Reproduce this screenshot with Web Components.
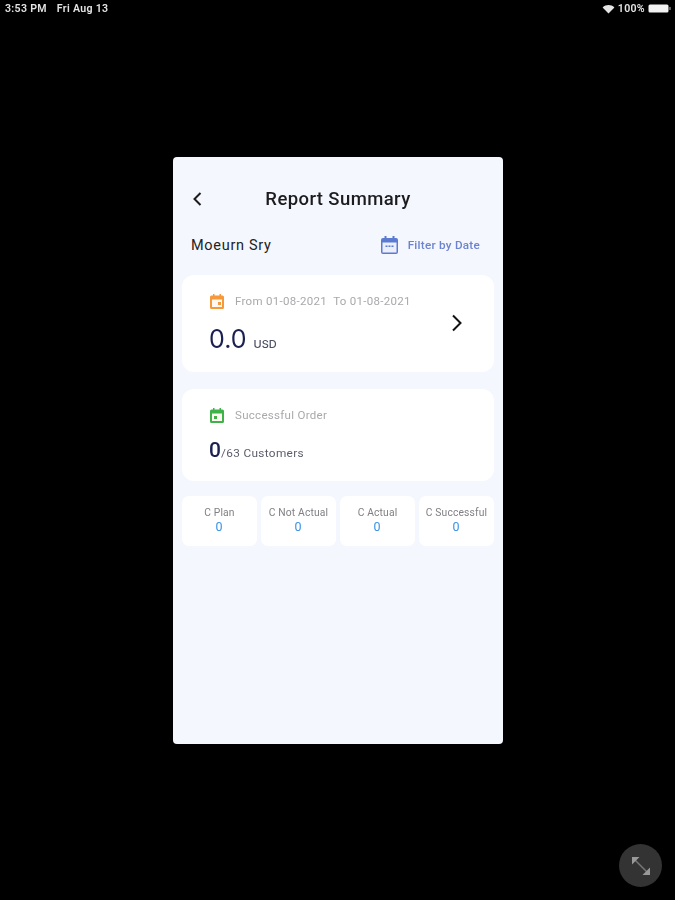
<!DOCTYPE html>
<html>
<head>
<meta charset="utf-8">
<style>
html, body { margin: 0; height: 900px; background: #000; overflow: hidden; }
body { font-family: Inter, Roboto, "Liberation Sans", sans-serif; position: relative; }
</style>
</head>
<body>
<status-bar></status-bar>
<report-screen>
  <report-card slot="cards" style="height:97px;margin-bottom:17px" tone="#f5993a" label="From 01-08-2021&nbsp; To 01-08-2021" arrow></report-card>
  <report-card slot="cards" style="height:92px" tone="#3fb24a" label="Successful Order" second></report-card>
  <stat-tile slot="tiles" label="C Plan"></stat-tile>
  <stat-tile slot="tiles" label="C Not Actual"></stat-tile>
  <stat-tile slot="tiles" label="C Actual"></stat-tile>
  <stat-tile slot="tiles" label="C Successful"></stat-tile>
</report-screen>
<expand-button></expand-button>

<script>
class StatusBar extends HTMLElement {
  constructor() {
    super();
    this.attachShadow({ mode: 'open' }).innerHTML = `
<style>
:host { display: flex; align-items: center; height: 17px; padding: 0 4px 0 5px; color: #e4e4e4; font: 600 10.6px Roboto, sans-serif; letter-spacing: .3px; filter: blur(.5px); }
.day { margin-left: 10px; }
.right { margin-left: auto; display: flex; align-items: center; gap: 3px; }
svg { display: block; }
</style>
<span>3:53 PM</span><span class="day">Fri Aug 13</span>
<div class="right">
  <svg width="13" height="10" viewBox="0 0 13 10"><path d="M6.5 9.5 0.6 3.4C4 .2 9 .2 12.4 3.4Z" fill="#e4e4e4"/></svg>
  <span>100%</span>
  <svg width="23" height="9" viewBox="0 0 23 9"><rect x=".5" y=".5" width="20" height="8" rx="1.500" fill="#f2f2f2"/><rect x="21.300" y="3" width="1.400" height="3" fill="#888"/></svg>
</div>`;
  }
}
customElements.define('status-bar', StatusBar);

class ReportScreen extends HTMLElement {
  constructor() {
    super();
    this.attachShadow({ mode: 'open' }).innerHTML = `
<style>
:host { display: block; width: 330px; height: 587px; margin: 140px 0 0 173px; box-sizing: border-box; background: #f4f7fe; border-radius: 4px; padding: 0 9px; font-family: Inter, Roboto, sans-serif; filter: blur(.5px); }
header { position: relative; height: 84px; display: flex; justify-content: center; align-items: center; }
header svg { position: absolute; left: 10px; top: 34px; }
h1 { margin: 0; font: 500 18.5px Roboto, sans-serif; letter-spacing: .4px; color: #1c1c1e; }
.who { height: 34px; display: flex; align-items: center; justify-content: space-between; padding: 0 14px 0 9px; margin-top: -13px; margin-bottom: 13px; }
.name { font: 400 14.5px Roboto, sans-serif; letter-spacing: .7px; color: #222; }
.filter { display: flex; align-items: center; gap: 10px; font: 500 11.7px Roboto, sans-serif; letter-spacing: .25px; color: #6c83cf; }
.filter svg { display: block; }
.tiles { display: flex; gap: 4px; margin-top: 15px; }
</style>
<header>
  <svg width="11" height="16" viewBox="0 0 11 16" fill="none" stroke="#1c1c1e" stroke-width="2"><path d="M8.5 2 2.5 8l6 6"/></svg>
  <h1>Report Summary</h1>
</header>
<div class="who">
  <span class="name">Moeurn Sry</span>
  <span class="filter">
    <svg width="17" height="18" viewBox="0 0 17 18"><path fill="#5a7bd0" d="M3.500 0h2v2h6V0h2v2H15a2 2 0 0 1 2 2v12a2 2 0 0 1-2 2H2a2 2 0 0 1-2-2V4a2 2 0 0 1 2-2h1.500Z"/><rect x="1.500" y="6.500" width="14" height="10" fill="#eaeffb"/><rect x="4.500" y="9.500" width="2" height="1.500" fill="#5a7bd0"/><rect x="7.500" y="9.500" width="2" height="1.500" fill="#5a7bd0"/><rect x="10.500" y="9.500" width="2" height="1.500" fill="#5a7bd0"/></svg>
    Filter by Date
  </span>
</div>
<slot name="cards"></slot>
<div class="tiles"><slot name="tiles"></slot></div>`;
  }
}
customElements.define('report-screen', ReportScreen);

class ReportCard extends HTMLElement {
  connectedCallback() {
    if (this.shadowRoot) return;
    const tone = this.getAttribute('tone');
    const second = this.hasAttribute('second');
    const value = second
      ? `<span class="zero">0</span><span class="of">/63 Customers</span>`
      : `<span class="big">0.0</span><span class="usd">USD</span>`;
    const arrow = this.hasAttribute('arrow')
      ? `<svg class="next" width="12" height="18" viewBox="0 0 12 18" fill="none" stroke="#111" stroke-width="2"><path d="M2 1.500 9.500 9 2 16.500"/></svg>` : '';
    this.attachShadow({ mode: 'open' }).innerHTML = `
<style>
:host { display: block; position: relative; box-sizing: border-box; background: #fff; border-radius: 12px; padding: 19px 27px 0 28px; }
.top { display: flex; align-items: center; gap: 11px; height: 15px; font: 400 11.500px Roboto, sans-serif; letter-spacing: .3px; color: #a9a9ac; }
.top span { padding-bottom: 2px; }
.top svg { display: block; }
.val { display: flex; align-items: baseline; margin: 15px 0 0 -1px; color: #1a2050; }
.big { font: 400 25px Inter, sans-serif; }
.usd { font: 500 11px Inter, sans-serif; margin-left: 7px; color: #4c4f63; }
.zero { font: 500 21px Roboto, sans-serif; }
.of { font: 400 11.800px Roboto, sans-serif; letter-spacing: .35px; color: #5b5d6b; }
.next { position: absolute; right: 31px; top: 39px; }
</style>
<div class="top">
  <svg width="14" height="15" viewBox="0 0 14 15"><path fill="${tone}" d="M3 0h1.500v1.500h5V0H11v1.500h1.500A1.500 1.500 0 0 1 14 3v10.500a1.500 1.500 0 0 1-1.500 1.500h-11A1.500 1.500 0 0 1 0 13.500V3a1.500 1.500 0 0 1 1.500-1.500H3Z"/><rect x="2" y="5.500" width="10" height="7.500" fill="#fff8f0"/><rect x="${second ? 4 : 8}" y="8" width="3" height="3" fill="${tone}"/></svg>
  <span>${this.getAttribute('label')}</span>
</div>
<div class="val">${value}</div>
${arrow}`;
  }
}
customElements.define('report-card', ReportCard);

class StatTile extends HTMLElement {
  connectedCallback() {
    if (this.shadowRoot) return;
    this.attachShadow({ mode: 'open' }).innerHTML = `
<style>
:host { flex: 1; display: flex; flex-direction: column; align-items: center; height: 50px; box-sizing: border-box; padding-top: 11px; background: #fff; border-radius: 7px; }
.l { font: 400 10.300px Roboto, sans-serif; letter-spacing: .15px; color: #808085; white-space: nowrap; line-height: 12px; }
.n { font: 400 12.500px Roboto, sans-serif; color: #3a92e8; line-height: 16px; margin-left: -1px; }
</style>
<span class="l">${this.getAttribute('label')}</span><span class="n">0</span>`;
  }
}
customElements.define('stat-tile', StatTile);

class ExpandButton extends HTMLElement {
  constructor() {
    super();
    this.attachShadow({ mode: 'open' }).innerHTML = `
<style>
:host { position: absolute; left: 619px; top: 844px; width: 43px; height: 43px; border-radius: 50%; background: #333; display: flex; align-items: center; justify-content: center; filter: blur(.7px); }
</style>
<svg width="24" height="24" viewBox="0 0 24 24"><path d="M6 6 18 18" stroke="#777" stroke-width="1.500"/><path d="M3 3h7.500L3 10.500Z" fill="#999"/><path d="M21 21h-7.500L21 13.500Z" fill="#999"/></svg>`;
  }
}
customElements.define('expand-button', ExpandButton);
</script>
</body>
</html>
